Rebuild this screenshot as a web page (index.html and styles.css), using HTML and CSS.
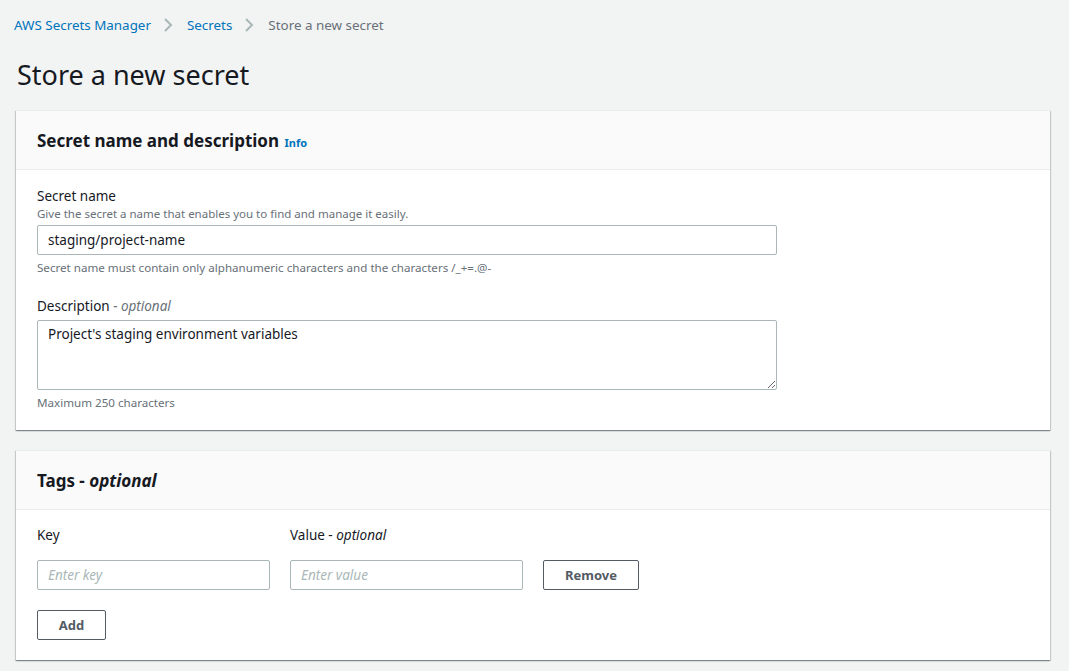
FILE: index.html
```html
<!DOCTYPE html>
<html lang="en">
<head>
<meta charset="utf-8">
<title>Store a new secret</title>
<link rel="stylesheet" href="styles.css">
</head>
<body>
<div class="page">
  <nav class="crumbs">
    <a class="crumb-link" href="#">AWS Secrets Manager</a>
    <svg class="chev" viewBox="0 0 10 16" width="10" height="16"><path d="M2 2l6 6-6 6" fill="none" stroke="#aab7b8" stroke-width="2"/></svg>
    <a class="crumb-link" href="#">Secrets</a>
    <svg class="chev" viewBox="0 0 10 16" width="10" height="16"><path d="M2 2l6 6-6 6" fill="none" stroke="#aab7b8" stroke-width="2"/></svg>
    <span class="crumb-current">Store a new secret</span>
  </nav>
  <h1 class="page-title">Store a new secret</h1>

  <section class="card">
    <header class="card-head">
      <h2 class="card-title">Secret name and description <a class="info" href="#">Info</a></h2>
    </header>
    <div class="card-body">
      <div class="field">
        <label class="label">Secret name</label>
        <div class="hint">Give the secret a name that enables you to find and manage it easily.</div>
        <input class="input wide" type="text" value="staging/project-name">
        <div class="constraint">Secret name must contain only alphanumeric characters and the characters /_+=.@-</div>
      </div>
      <div class="field">
        <label class="label">Description <i class="opt">- optional</i></label>
        <textarea class="textarea wide">Project's staging environment variables</textarea>
        <div class="constraint">Maximum 250 characters</div>
      </div>
    </div>
  </section>

  <section class="card">
    <header class="card-head">
      <h2 class="card-title">Tags - <i>optional</i></h2>
    </header>
    <div class="card-body tags-body">
      <div class="tag-row">
        <div class="tag-col">
          <label class="label">Key</label>
          <input class="input small" type="text" placeholder="Enter key">
        </div>
        <div class="tag-col">
          <label class="label">Value - <i>optional</i></label>
          <input class="input small" type="text" placeholder="Enter value">
        </div>
        <div class="tag-col btn-col">
          <button class="btn">Remove</button>
        </div>
      </div>
      <button class="btn add">Add</button>
    </div>
  </section>
</div>
</body>
</html>
```

FILE: styles.css
```css
* { box-sizing: border-box; }
html, body { margin: 0; padding: 0; }
body {
  background: #f2f3f3;
  font-family: "Noto Sans", "Open Sans", Arial, sans-serif;
  color: #16191f;
  font-size: 14px;
}
.page {
  padding: 0 19px 20px 16px;
}
.crumbs {
  display: flex;
  align-items: center;
  height: 50px;
  margin-left: -2px;
  font-size: 13.4px;
}
.crumb-link {
  color: #0073bb;
  text-decoration: none;
}
.chev {
  margin: 0 14px 0 12px;
}
.crumb-current { color: #687078; }
.page-title {
  margin: 0 0 10px;
  font-size: 27px;
  font-weight: 400;
  line-height: 50px;
  padding-left: 1px;
}
.card {
  background: #fff;
  border-top: 1px solid #eaeded;
  box-shadow: 0 1px 1px 0 rgba(0,28,36,.3), 1px 1px 1px 0 rgba(0,28,36,.15), -1px 1px 1px 0 rgba(0,28,36,.15);
  margin-bottom: 20px;
}
.card-head {
  background: #fafafa;
  border-bottom: 1px solid #eaeded;
  height: 59px;
  display: flex;
  align-items: center;
  padding: 0 21px;
}
.card-title {
  margin: 0;
  font-size: 17px;
  font-weight: 700;
}
.info {
  font-size: 11px;
  color: #0073bb;
  text-decoration: none;
  font-weight: 700;
  margin-left: 1px;
}
.card-body {
  padding: 15px 21px 19px;
}
.field { margin-bottom: 19px; }
.field:last-child { margin-bottom: 0; }
.label {
  display: block;
  font-size: 13.5px;
  line-height: 22px;
}
.opt { color: #687078; }
.hint {
  font-size: 11.5px;
  color: #687078;
  line-height: 13px;
  margin-bottom: 5px;
}
.constraint {
  font-size: 11.6px;
  color: #687078;
  line-height: 16px;
  margin-top: 5px;
}
.input, .textarea {
  display: block;
  font-family: inherit;
  font-size: 13.5px;
  color: #16191f;
  border: 1px solid #aab7b8;
  border-radius: 2px;
  background: #fff;
  padding: 4px 10px;
}
.input { height: 30px; }
.wide { width: 740px; }
.textarea {
  height: 70px;
  resize: vertical;
  margin-top: 3px;
}
.input::placeholder {
  color: #aab7b8;
  font-style: italic;
}
.tags-body { padding-top: 14px; padding-bottom: 20px; }
.tag-row {
  display: flex;
  gap: 20px;
  align-items: flex-end;
}
.tag-col .label { margin-bottom: 14px; }
.small { width: 233px; }
.btn {
  font-family: inherit;
  font-size: 13px;
  font-weight: 700;
  color: #545b64;
  background: #fff;
  border: 1px solid #545b64;
  border-radius: 2px;
  height: 30px;
  padding: 0 20px;
}
.btn-col .btn { width: 96px; }
.add { margin-top: 20px; width: 69px; padding: 0; }
```
